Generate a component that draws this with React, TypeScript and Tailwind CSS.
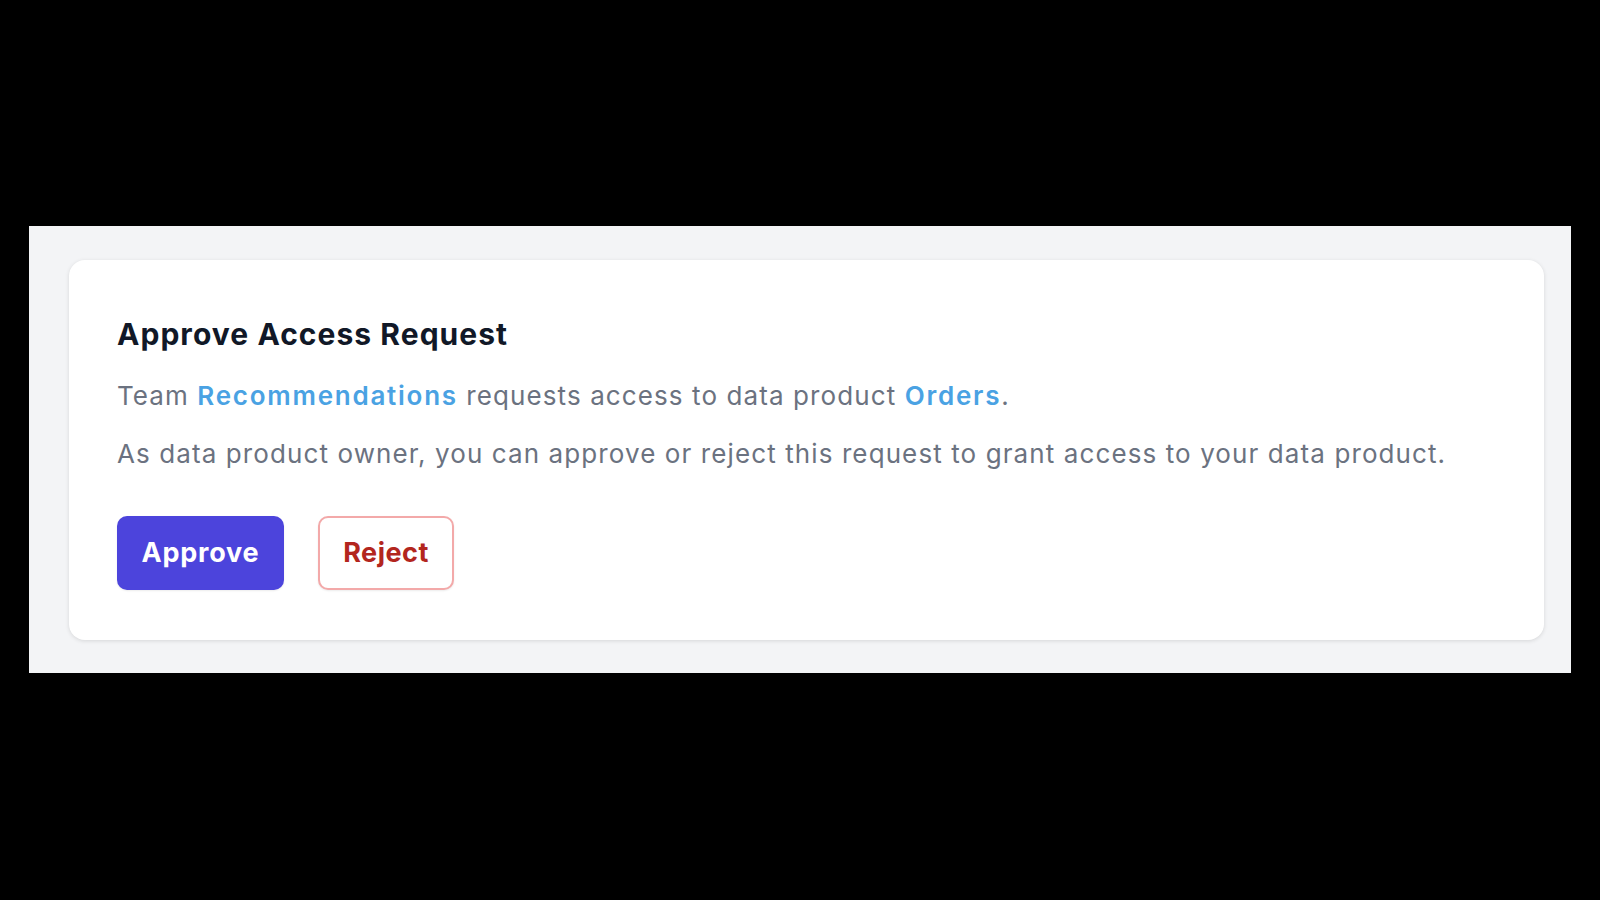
export default function App() {
  return (
    <div className="min-h-[900px] w-[1600px] bg-black pt-[226px] pl-[29px]" style={{ fontFamily: 'Inter, "Noto Sans", sans-serif' }}>
      <div className="w-[1542px] h-[447px] bg-[#f3f4f6] pt-[34px] pl-[40px]">
        <div className="w-[1475px] h-[380px] bg-white rounded-[16px] shadow-[0_1px_4px_rgba(0,0,0,0.12)] pl-[48px] pt-[56px]">
          <h2 className="text-[30px] leading-[36px] font-bold text-[#111827] tracking-[1.05px]">Approve Access Request</h2>
          <p className="mt-[26px] text-[26px] leading-[36px] text-[#6b7280] tracking-[1.1px]">
            Team <span className="font-semibold text-[#4aa2e3] tracking-[1.75px]">Recommendations</span> requests access to data product{' '}
            <span className="font-semibold text-[#4aa2e3] tracking-[1.75px]">Orders</span>.
          </p>
          <p className="mt-[22px] text-[26px] leading-[36px] text-[#6b7280] tracking-[1.1px]">
            As data product owner, you can approve or reject this request to grant access to your data product.
          </p>
          <div className="mt-[44px] flex gap-[34px]">
            <button className="h-[74px] w-[167px] rounded-[10px] bg-[#4c44dc] text-white text-[27px] font-bold tracking-[0.8px] shadow-[0_1px_2px_rgba(0,0,0,0.08)]">
              Approve
            </button>
            <button className="h-[74px] w-[136px] rounded-[10px] bg-white border-2 border-[#f3a9a9] text-[#b3261e] text-[27px] font-bold tracking-[0.5px] shadow-[0_1px_2px_rgba(0,0,0,0.08)]">
              Reject
            </button>
          </div>
        </div>
      </div>
    </div>
  );
}
